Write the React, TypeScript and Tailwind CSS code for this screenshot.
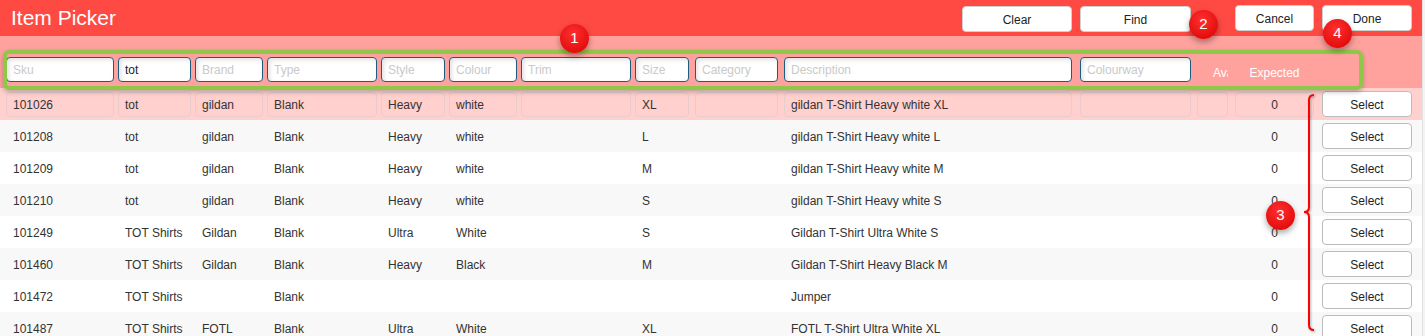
import React from "react";

type Row = {
  sku: string;
  sup: string;
  brand: string;
  type: string;
  style: string;
  colour: string;
  trim: string;
  size: string;
  category: string;
  description: string;
  colourway: string;
  expected: string;
};

const cols: { key: keyof Row; placeholder: string; cls: string }[] = [
  { key: "sku", placeholder: "Sku", cls: "w-[108px] mr-[4px]" },
  { key: "sup", placeholder: "Supplier", cls: "w-[73px] mr-[4px]" },
  { key: "brand", placeholder: "Brand", cls: "w-[68px] mr-[4px]" },
  { key: "type", placeholder: "Type", cls: "w-[110px] mr-[4px]" },
  { key: "style", placeholder: "Style", cls: "w-[64px] mr-[4px]" },
  { key: "colour", placeholder: "Colour", cls: "w-[68px] mr-[4px]" },
  { key: "trim", placeholder: "Trim", cls: "w-[110px] mr-[4px]" },
  { key: "size", placeholder: "Size", cls: "w-[54px] mr-[6px]" },
  { key: "category", placeholder: "Category", cls: "w-[83px] mr-[6px]" },
  { key: "description", placeholder: "Description", cls: "w-[288px] mr-[8px]" },
  { key: "colourway", placeholder: "Colourway", cls: "w-[111px] mr-[6px]" },
];

const mk = (
  sku: string,
  sup: string,
  brand: string,
  style: string,
  colour: string,
  size: string,
  description: string
): Row => ({
  sku,
  sup,
  brand,
  type: "Blank",
  style,
  colour,
  trim: "",
  size,
  category: "",
  description,
  colourway: "",
  expected: "0",
});

const rows: Row[] = [
  mk("101026", "tot", "gildan", "Heavy", "white", "XL", "gildan T-Shirt Heavy white XL"),
  mk("101208", "tot", "gildan", "Heavy", "white", "L", "gildan T-Shirt Heavy white L"),
  mk("101209", "tot", "gildan", "Heavy", "white", "M", "gildan T-Shirt Heavy white M"),
  mk("101210", "tot", "gildan", "Heavy", "white", "S", "gildan T-Shirt Heavy white S"),
  mk("101249", "TOT Shirts", "Gildan", "Ultra", "White", "S", "Gildan T-Shirt Ultra White S"),
  mk("101460", "TOT Shirts", "Gildan", "Heavy", "Black", "M", "Gildan T-Shirt Heavy Black M"),
  mk("101472", "TOT Shirts", "", "", "", "", "Jumper"),
  mk("101487", "TOT Shirts", "FOTL", "Ultra", "White", "XL", "FOTL T-Shirt Ultra White XL"),
];

const rowBg = (i: number) =>
  i === 0 ? "bg-[#ffd0ce]" : i % 2 === 1 ? "bg-[#f8f8f8]" : "bg-white";

const Badge = ({ n, pos }: { n: number; pos: string }) => (
  <div
    className={`absolute ${pos} w-[29px] h-[29px] rounded-full bg-[radial-gradient(circle_at_45%_35%,#ff3030,#d90000)] shadow-[0_3px_6px_rgba(0,0,0,0.35)] flex items-center justify-center text-white text-[15px]`}
  >
    {n}
  </div>
);

const App = () => {
  return (
    <div className="relative w-[1425px] h-[336px] overflow-hidden flex bg-white font-['Liberation_Sans',Arial,sans-serif] text-[12px] text-[#333]">
      <div className="w-[1422px] shrink-0">
        {/* header */}
        <div className="h-[36px] bg-[#ff4a43] flex items-start">
          <div className="pl-[11px] h-[36px] flex items-center text-white text-[21px]">Item Picker</div>
          <div className="ml-auto flex items-start pr-[10px]">
            <button className="mt-[6px] w-[110px] h-[26px] pt-[1px] rounded-[4px] border border-[#cfcfcf] bg-white text-[12px] text-[#222]">
              Clear
            </button>
            <button className="mt-[6px] ml-[8px] w-[111px] h-[26px] pt-[1px] rounded-[4px] border border-[#cfcfcf] bg-white text-[12px] text-[#222]">
              Find
            </button>
            <button className="mt-[5px] ml-[44px] w-[79px] h-[26px] pt-[1px] rounded-[4px] border border-[#cfcfcf] bg-white text-[12px] text-[#222]">
              Cancel
            </button>
            <button className="mt-[5px] ml-[8px] w-[90px] h-[26px] pt-[1px] rounded-[4px] border border-[#cfcfcf] bg-white text-[12px] text-[#222]">
              Done
            </button>
          </div>
        </div>

        {/* filters */}
        <div className="h-[52px] bg-[#ffa29e] flex items-start pl-[6px] pt-[21px]">
          {cols.map((c) => (
            <input
              key={c.key}
              readOnly
              placeholder={c.placeholder}
              defaultValue={c.key === "sup" ? "tot" : ""}
              className={`${c.cls} h-[25px] rounded-[4px] border border-[#1d5b80] bg-white pl-[6px] text-[12px] text-[#222] placeholder:text-[#c9c9c9] shadow-[inset_2px_2px_4px_rgba(0,0,0,0.12)] outline-none`}
            />
          ))}
          <div className="w-[31px] mr-[7px] h-[25px] overflow-hidden whitespace-nowrap pl-[16px] flex items-end text-white">
            Available
          </div>
          <div className="w-[79px] mr-[8px] h-[25px] flex items-end justify-center text-white">
            Expected
          </div>
        </div>

        {/* rows */}
        {rows.map((r, i) => {
          const box =
            i === 0 ? "border border-[#e6cdcc] rounded-[4px]" : "border border-transparent";
          return (
            <div key={r.sku} className={`h-[32px] flex items-center pl-[6px] ${rowBg(i)}`}>
              {cols.map((c) => (
                <div
                  key={c.key}
                  className={`${c.cls} ${box} h-[25px] pt-[1px] flex items-center pl-[6px] whitespace-nowrap overflow-hidden`}
                >
                  {r[c.key]}
                </div>
              ))}
              <div className={`w-[31px] mr-[7px] h-[25px] ${box}`} />
              <div className={`w-[79px] mr-[8px] h-[25px] pt-[1px] ${box} flex items-center justify-center`}>
                {r.expected}
              </div>
              <button className="w-[90px] h-[26px] pt-[1px] rounded-[4px] border border-[#bcbcbc] bg-white text-[12px] text-[#222]">
                Select
              </button>
            </div>
          );
        })}
      </div>
      <div className="flex-1 bg-[#f3f3f3] border-l border-[#e3e3e3]" />

      {/* annotations */}
      <div className="absolute left-[3px] top-[50px] w-[1360px] h-[40px] rounded-[6px] border-4 border-[#8fc74a] shadow-[0_2px_5px_rgba(0,0,0,0.25)]" />
      <svg className="absolute left-[1300px] top-[92px]" width="20" height="242" viewBox="0 0 20 242">
        <path
          d="M14 3 Q9 3 9 8 L9 115 Q9 120 4 120 Q9 120 9 125 L9 233 Q9 238 14 238"
          fill="none"
          stroke="#ff0000"
          strokeWidth="2"
          style={{ filter: "drop-shadow(1px 1px 1px rgba(0,0,0,0.3))" }}
        />
      </svg>
      <Badge n={1} pos="left-[560px] top-[24px]" />
      <Badge n={2} pos="left-[1189px] top-[10px]" />
      <Badge n={3} pos="left-[1266px] top-[201px]" />
      <Badge n={4} pos="left-[1323px] top-[19px]" />
    </div>
  );
};

export default App;
